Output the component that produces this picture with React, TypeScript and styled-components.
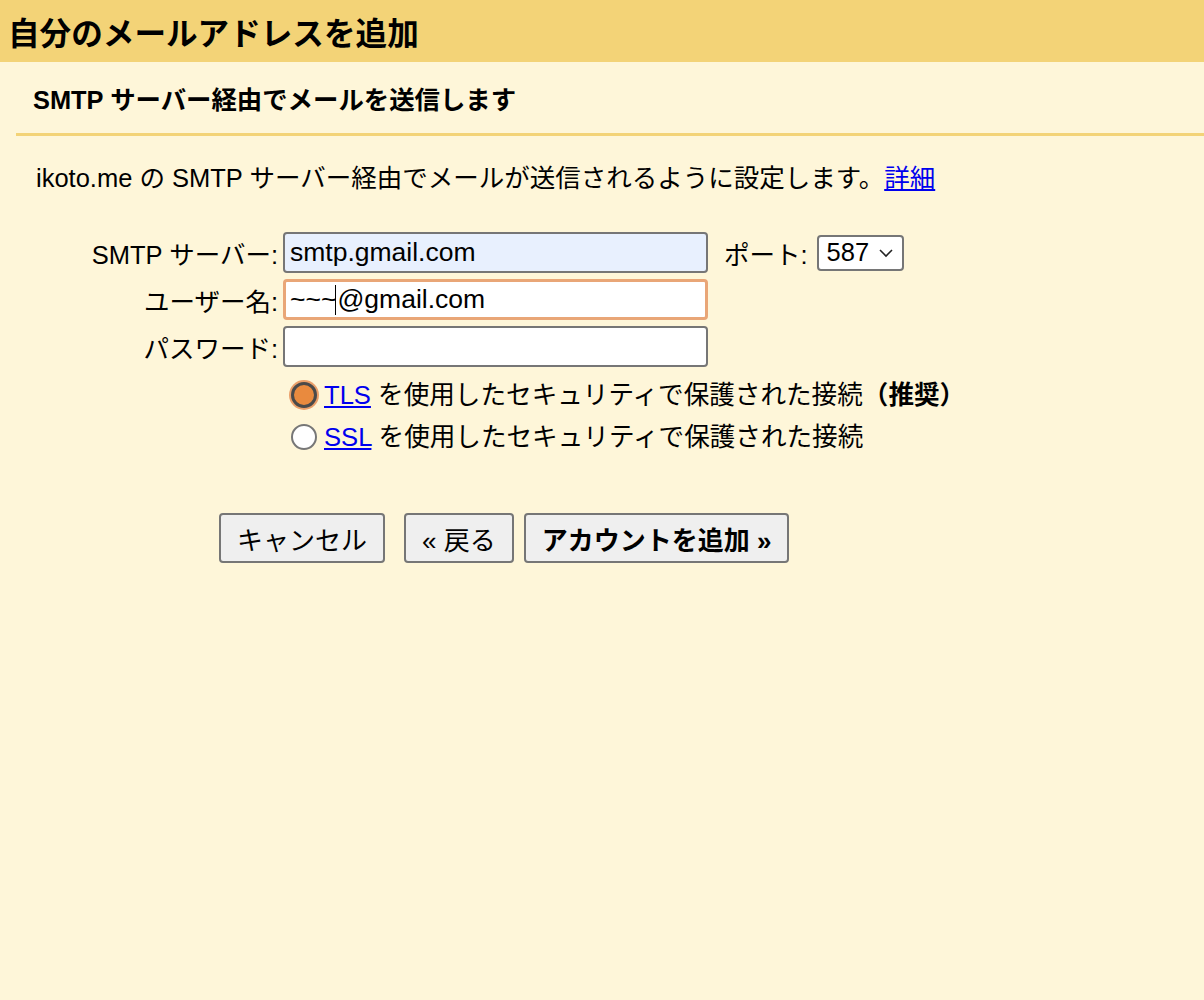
import React from 'react';
import styled, { createGlobalStyle } from 'styled-components';

const GlobalStyle = createGlobalStyle`
  body {
    margin: 0;
    background: #fef6d9;
    font-family: 'Liberation Sans', 'Noto Sans CJK JP', sans-serif;
    color: #000;
  }
`;

const Page = styled.div`
  min-height: 1000px;
  background: #fef6d9;
`;

const Header = styled.div`
  height: 62px;
  background: #f3d377;
  display: flex;
  align-items: center;
  padding-left: 8px;
  font-size: 31.6px;
  font-weight: bold;
`;

const Section = styled.div`
  padding-left: 16px;
`;

const SubHeader = styled.div`
  display: flex;
  align-items: center;
  padding-left: 17px;
  font-size: 25.4px;
  font-weight: bold;
  border-bottom: 3px solid #f3d377;
  box-sizing: border-box;
  height: 74px;
`;

const Description = styled.p`
  margin: 26px 0 0 20px;
  font-size: 25.5px;
  line-height: 32px;
`;

const Link = styled.a`
  color: #0000ee;
  text-decoration: underline;
`;

const FormGrid = styled.div`
  display: grid;
  grid-template-columns: 262px 425px auto;
  column-gap: 5px;
  row-gap: 6px;
  margin-top: 38px;
  align-items: center;
`;

const Label = styled.label`
  text-align: right;
  font-size: 25.5px;
  white-space: nowrap;
`;

const TextInput = styled.div<{ $autofill?: boolean; $focus?: boolean }>`
  height: 41px;
  box-sizing: border-box;
  border: ${(p) => (p.$focus ? '3px solid #e9a677' : '2px solid #767676')};
  border-radius: 4px;
  background: ${(p) => (p.$autofill ? '#e8f0fe' : '#fff')};
  padding: 0 ${(p) => (p.$focus ? '4px' : '5px')};
  display: flex;
  align-items: center;
  font-size: 26.5px;
`;

const Caret = styled.span`
  display: inline-block;
  width: 1px;
  height: 30px;
  background: #000;
  margin: 0 1px 0 -1px;
  vertical-align: middle;
`;

const PortWrap = styled.div`
  display: flex;
  align-items: center;
  gap: 9px;
  margin-left: 11px;
  font-size: 25.5px;
`;

const Select = styled.div`
  height: 36px;
  box-sizing: border-box;
  border: 2px solid #767676;
  border-radius: 4px;
  background: #fff;
  display: flex;
  align-items: center;
  gap: 9px;
  padding: 0 8px 0 8px;
  font-size: 25.5px;
`;

const RadioList = styled.div`
  margin: 12px 0 0 275px;
  display: flex;
  flex-direction: column;
  gap: 10px;
`;

const RadioRow = styled.div`
  display: flex;
  align-items: center;
  gap: 7px;
  font-size: 25.6px;
  line-height: 32px;
`;

const RadioDot = styled.span<{ $checked?: boolean }>`
  width: 26px;
  height: 26px;
  box-sizing: border-box;
  border-radius: 50%;
  flex: none;
  border: ${(p) => (p.$checked ? '3px solid #4a4a4a' : '2px solid #777')};
  background: ${(p) => (p.$checked ? '#e98a3e' : '#fff')};
  box-shadow: ${(p) => (p.$checked ? '0 0 0 2px #eba06a' : 'none')};
`;

const Buttons = styled.div`
  display: flex;
  margin: 60px 0 0 203px;
  gap: 10px;
`;

const Button = styled.button<{ $bold?: boolean; $spaced?: boolean }>`
  height: 50px;
  box-sizing: border-box;
  border: 2px solid #767676;
  border-radius: 4px;
  background: #efefef;
  font-family: 'Liberation Sans', 'Noto Sans CJK JP', sans-serif;
  font-size: 26px;
  font-weight: ${(p) => (p.$bold ? 'bold' : 'normal')};
  padding: 0 16px;
  margin-right: ${(p) => (p.$spaced ? '9px' : '0')};
  color: #000;
`;

const Chevron = () => (
  <svg width="16" height="10" viewBox="0 0 16 10" fill="none">
    <path d="M2 2 L8 8 L14 2" stroke="#222" strokeWidth="1.6" />
  </svg>
);

export default function App() {
  return (
    <Page>
      <GlobalStyle />
      <Header>自分のメールアドレスを追加</Header>
      <Section>
        <SubHeader>SMTP サーバー経由でメールを送信します</SubHeader>
        <Description>
          ikoto.me の SMTP サーバー経由でメールが送信されるように設定します。<Link href="#">詳細</Link>
        </Description>
        <FormGrid>
          <Label>SMTP サーバー:</Label>
          <TextInput $autofill>smtp.gmail.com</TextInput>
          <PortWrap>
            ポート:
            <Select>
              587
              <Chevron />
            </Select>
          </PortWrap>
          <Label>ユーザー名:</Label>
          <TextInput $focus>
            ~~~<Caret />@gmail.com
          </TextInput>
          <div />
          <Label>パスワード:</Label>
          <TextInput />
          <div />
        </FormGrid>
        <RadioList>
          <RadioRow>
            <RadioDot $checked />
            <span>
              <Link href="#">TLS</Link> を使用したセキュリティで保護された接続<b>（推奨）</b>
            </span>
          </RadioRow>
          <RadioRow>
            <RadioDot />
            <span>
              <Link href="#">SSL</Link> を使用したセキュリティで保護された接続
            </span>
          </RadioRow>
        </RadioList>
        <Buttons>
          <Button $spaced>キャンセル</Button>
          <Button>« 戻る</Button>
          <Button $bold>アカウントを追加 »</Button>
        </Buttons>
      </Section>
    </Page>
  );
}
